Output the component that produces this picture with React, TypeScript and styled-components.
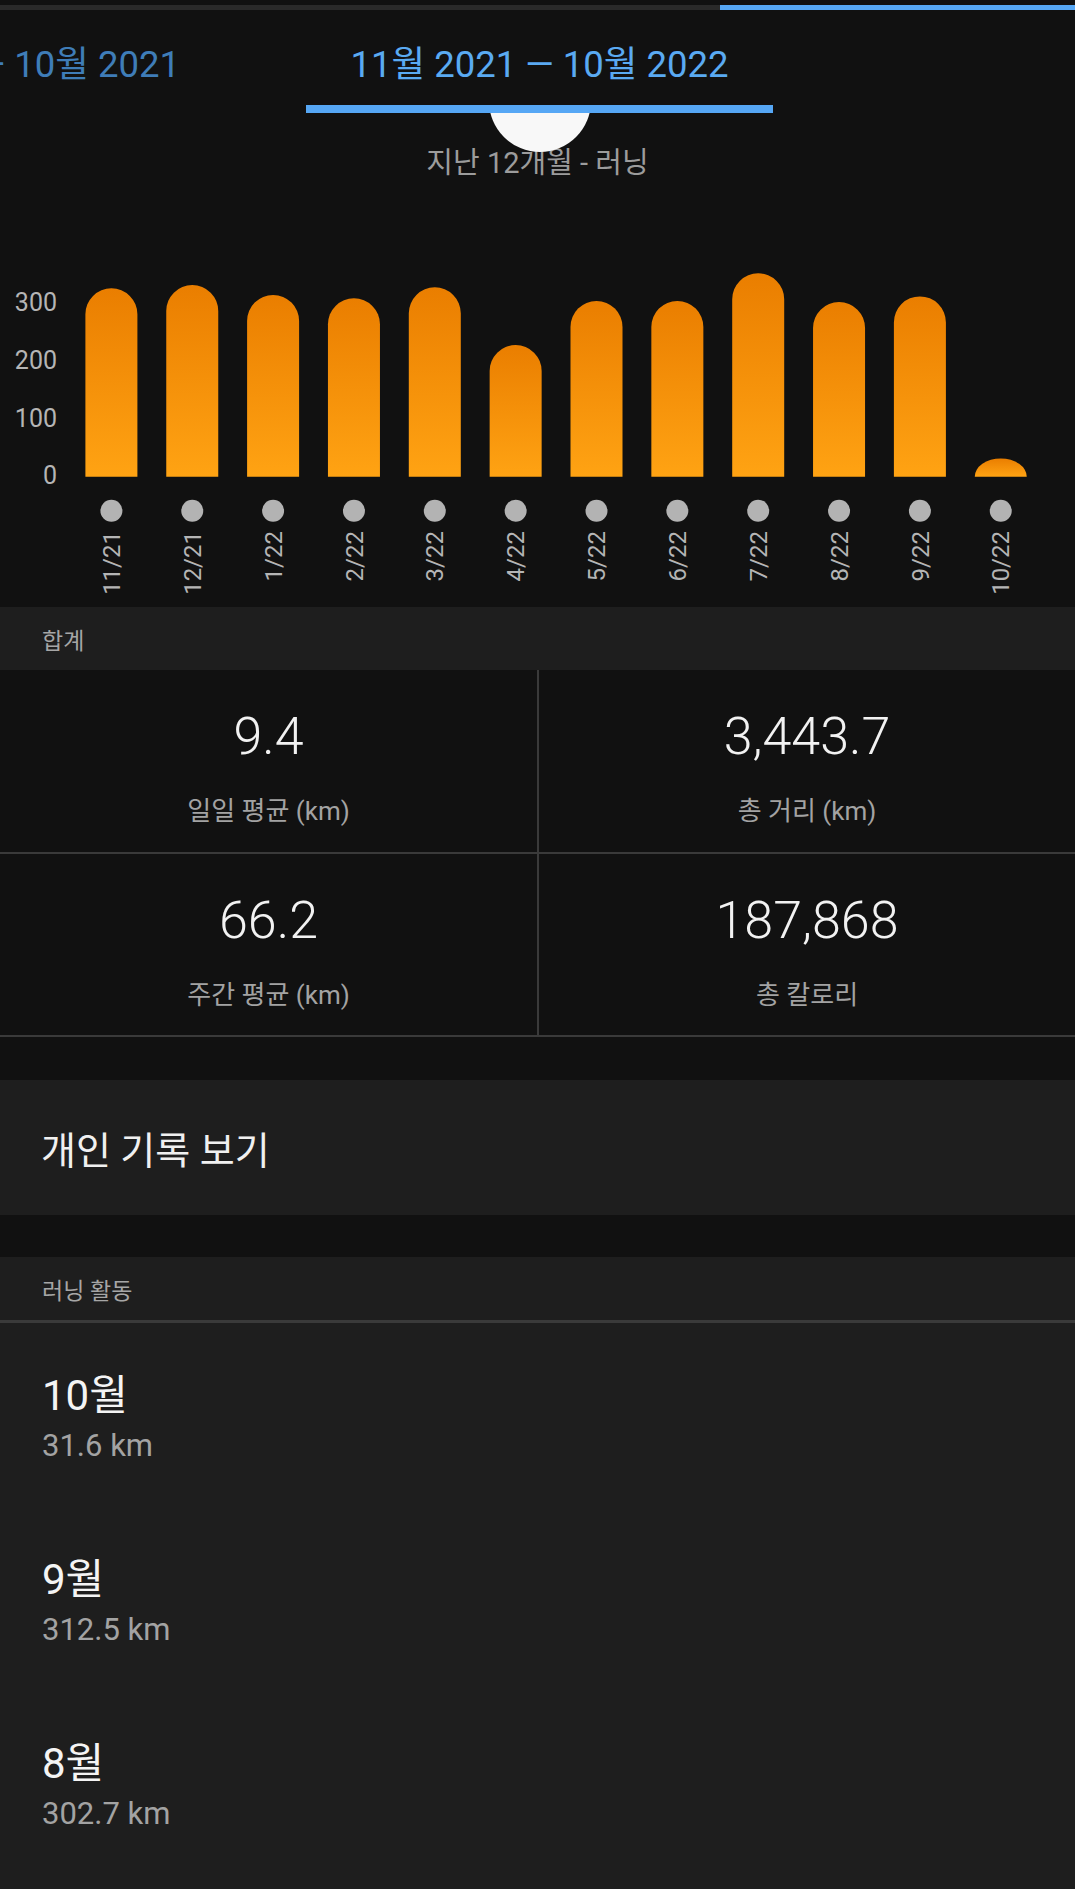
import { FC } from 'react';
import styled, { createGlobalStyle } from 'styled-components';

const GlobalStyle = createGlobalStyle`
  html, body {
    margin: 0;
    padding: 0;
    background: #111111;
  }
  body {
    font-family: Roboto, "Noto Sans CJK KR", sans-serif;
    -webkit-font-smoothing: antialiased;
  }
`;

const Page = styled.div`
  display: flex;
  flex-direction: column;
  width: 1075px;
  height: 1889px;
  overflow: hidden;
  background: #111111;
`;

/* pager indicator at the very top */
const PagerTrack = styled.div`
  display: flex;
  flex: none;
  height: 5px;
  margin-top: 5px;
`;

const PagerSegment = styled.div<{ $active?: boolean }>`
  flex: ${(p) => (p.$active ? '1 1 auto' : '0 0 720px')};
  background: ${(p) => (p.$active ? '#56a7f5' : '#2a2a2a')};
`;

/* period tabs */
const TabStrip = styled.div`
  display: grid;
  flex: none;
  grid-template-columns: 306px 467px 1fr;
  height: 103px;
`;

const PeriodTab = styled.div<{ $active?: boolean }>`
  display: flex;
  justify-content: ${(p) => (p.$active ? 'center' : 'flex-end')};
  align-items: flex-start;
  box-sizing: border-box;
  min-width: 0;
  overflow: hidden;
  padding-top: 34px;
  padding-right: ${(p) => (p.$active ? '0' : '126px')};
  border-bottom: 8px solid ${(p) => (p.$active ? '#56a7f5' : 'transparent')};
  font-size: 36.5px;
  line-height: 42px;
  white-space: nowrap;
  color: ${(p) => (p.$active ? '#5aaaf2' : '#3f7db8')};

  span {
    flex: none;
  }
`;

const SubtitleArea = styled.div`
  position: relative;
  flex: none;
  overflow: hidden;
  box-sizing: border-box;
  height: 67px;
  padding-top: 33px;
  text-align: center;
  font-size: 29px;
  line-height: 34px;
  color: #9c9c9c;
`;

const RefreshKnob = styled.div`
  position: absolute;
  top: -63px;
  left: 489px;
  width: 102px;
  height: 102px;
  border-radius: 50%;
  background: #f8f8f8;
`;

/* chart */
const Chart = styled.svg`
  display: block;
  flex: none;
`;

const AxisText = styled.text`
  font-family: Roboto, sans-serif;
  font-size: 25px;
  fill: #b5b5b5;
`;

const MonthText = styled.text`
  font-family: Roboto, sans-serif;
  font-size: 24px;
  fill: #b5b5b5;
`;

/* sections */
const SectionHeader = styled.div<{ $divider?: boolean }>`
  display: flex;
  flex: none;
  align-items: center;
  height: 63px;
  padding-left: 42px;
  background: #1e1e1e;
  border-bottom: ${(p) => (p.$divider ? '3px solid #3a3a3a' : 'none')};
  font-size: 23px;
  color: #a6a6a6;
`;

const StatGrid = styled.div`
  display: grid;
  flex: none;
  grid-template-columns: 537px 1fr;
  grid-template-rows: 182px 181px;
  gap: 2px;
  background: #3a3a3a;
  border-bottom: 2px solid #3a3a3a;
`;

const StatCell = styled.div`
  display: flex;
  flex-direction: column;
  align-items: center;
  box-sizing: border-box;
  padding-top: 37px;
  background: #111111;
`;

const StatValue = styled.div`
  font-size: 52px;
  font-weight: 300;
  line-height: 60px;
  color: #f2f2f2;
`;

const StatLabel = styled.div`
  margin-top: 29px;
  font-size: 26px;
  line-height: 30px;
  color: #a3a3a3;
`;

const Gap = styled.div<{ $h: number }>`
  flex: none;
  height: ${(p) => p.$h}px;
`;

const LinkRow = styled.div`
  display: flex;
  flex: none;
  align-items: center;
  height: 135px;
  padding-left: 41px;
  background: #1e1e1e;
  font-size: 38px;
  color: #f0f0f0;
`;

const ActivityList = styled.div`
  flex: 1 1 auto;
  background: #1e1e1e;
`;

const ActivityItem = styled.div`
  display: flex;
  flex-direction: column;
  justify-content: center;
  box-sizing: border-box;
  height: 184px;
  padding: 8px 0 0 42px;
`;

const MonthTitle = styled.div`
  font-size: 42px;
  line-height: 52px;
  color: #f4f4f4;
`;

const MonthDistance = styled.div`
  font-size: 31px;
  line-height: 47px;
  color: #a3a3a3;
`;

const months = [
  { label: '11/21', km: 326.5 },
  { label: '12/21', km: 332.2 },
  { label: '1/22', km: 314.9 },
  { label: '2/22', km: 309.2 },
  { label: '3/22', km: 328.2 },
  { label: '4/22', km: 228.2 },
  { label: '5/22', km: 304.5 },
  { label: '6/22', km: 304.5 },
  { label: '7/22', km: 352.5 },
  { label: '8/22', km: 302.7 },
  { label: '9/22', km: 312.5 },
  { label: '10/22', km: 31.6 },
];

const stats = [
  { value: '9.4', label: '일일 평균 (km)' },
  { value: '3,443.7', label: '총 거리 (km)' },
  { value: '66.2', label: '주간 평균 (km)' },
  { value: '187,868', label: '총 칼로리' },
];

const activities = [
  { month: '10월', km: '31.6 km' },
  { month: '9월', km: '312.5 km' },
  { month: '8월', km: '302.7 km' },
];

const BASE = 296.7;
const KM_PX = 0.577;
const BAR_W = 52;
const PITCH = 80.85;
const FIRST_X = 85.4;
const DOT_Y = 330.7;
const LABEL_Y = 351;

const barPath = (x: number, h: number) => {
  const r = BAR_W / 2;
  if (h <= r) {
    return `M${x},${BASE} A${r},${h} 0 0 1 ${x + BAR_W},${BASE} Z`;
  }
  const top = BASE - h + r;
  return `M${x},${BASE} V${top} A${r},${r} 0 0 1 ${x + BAR_W},${top} V${BASE} Z`;
};

const MonthlyChart: FC = () => (
  <Chart width={1075} height={427} viewBox="0 0 1075 427">
    <defs>
      <linearGradient id="barFill" x1="0" y1="0" x2="0" y2="1">
        <stop offset="0" stopColor="#ea7e00" />
        <stop offset="1" stopColor="#ffa313" />
      </linearGradient>
    </defs>

    {/* y axis */}
    {[0, 100, 200, 300].map((v) => (
      <AxisText
        key={v}
        x={57}
        y={BASE - v * KM_PX - 1}
        textAnchor="end"
        dominantBaseline="central"
      >
        {v}
      </AxisText>
    ))}

    {/* bars, dots, month labels */}
    {months.map((m, i) => {
      const x = FIRST_X + i * PITCH;
      const cx = x + BAR_W / 2;
      return (
        <g key={m.label}>
          <path d={barPath(x, m.km * KM_PX)} fill="url(#barFill)" />
          <circle cx={cx} cy={DOT_Y} r={11} fill="#b3b3b3" />
          <MonthText
            x={cx}
            y={LABEL_Y}
            dy="0.36em"
            textAnchor="end"
            transform={`rotate(-90 ${cx} ${LABEL_Y})`}
          >
            {m.label}
          </MonthText>
        </g>
      );
    })}
  </Chart>
);

export default function App() {
  return (
    <Page>
      <GlobalStyle />

      <PagerTrack>
        <PagerSegment />
        <PagerSegment $active />
      </PagerTrack>

      <TabStrip>
        <PeriodTab>
          <span>11월 2020 — 10월 2021</span>
        </PeriodTab>
        <PeriodTab $active>
          <span>11월 2021 — 10월 2022</span>
        </PeriodTab>
      </TabStrip>

      <SubtitleArea>
        <RefreshKnob />
        지난 12개월 - 러닝
      </SubtitleArea>

      <MonthlyChart />

      <SectionHeader>합계</SectionHeader>
      <StatGrid>
        {stats.map((s) => (
          <StatCell key={s.label}>
            <StatValue>{s.value}</StatValue>
            <StatLabel>{s.label}</StatLabel>
          </StatCell>
        ))}
      </StatGrid>

      <Gap $h={43} />
      <LinkRow>개인 기록 보기</LinkRow>
      <Gap $h={42} />

      <SectionHeader $divider>러닝 활동</SectionHeader>
      <ActivityList>
        {activities.map((a) => (
          <ActivityItem key={a.month}>
            <MonthTitle>{a.month}</MonthTitle>
            <MonthDistance>{a.km}</MonthDistance>
          </ActivityItem>
        ))}
      </ActivityList>
    </Page>
  );
}
